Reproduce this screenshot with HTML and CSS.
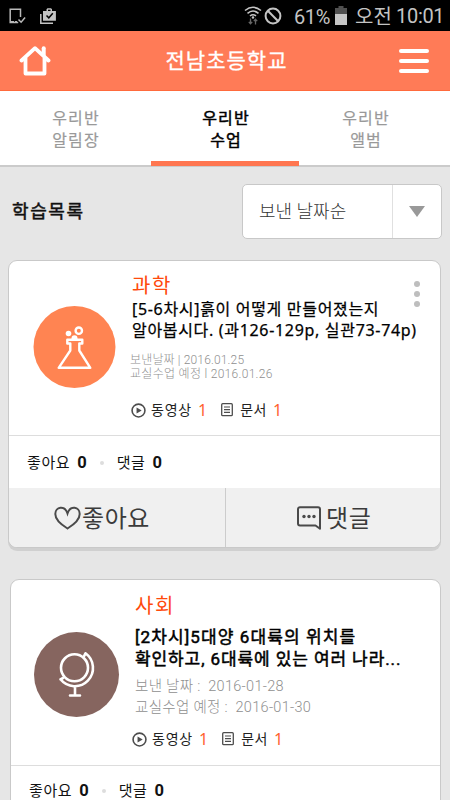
FILE: index.html
```html
<!DOCTYPE html>
<html lang="ko">
<head>
<meta charset="utf-8">
<meta name="viewport" content="width=device-width, initial-scale=1">
<title>우리반 수업</title>
<link rel="stylesheet" href="styles.css">
</head>
<body>
<svg class="defs" aria-hidden="true">
  <symbol id="play" viewBox="0 0 14 14"><circle cx="7" cy="7" r="6" fill="none" stroke="#4d4d4d" stroke-width="1.5"/><path d="M5.2 4.1v5.8L10 7z" fill="#4d4d4d"/></symbol>
  <symbol id="doc" viewBox="0 0 12 14"><rect x=".7" y=".7" width="10.6" height="12" rx="1" fill="none" stroke="#4d4d4d" stroke-width="1.3"/><path d="M3 4h6M3 6.7h6M3 9.4h6" stroke="#4d4d4d" stroke-width="1.2"/></symbol>
</svg>
<div class="screen">
  <div class="status">
    <div class="status-left">
      <svg width="17" height="16" viewBox="0 0 17 16"><path d="M11.5 9V1.2H1.2v13.4h8" fill="none" stroke="#b9b9b9" stroke-width="1.5"/><path d="M1 13h4v2H1zM6 13h2v2H6z" fill="#b9b9b9"/><path d="M9.5 11.5l2.6 2.7 4-4.7" fill="none" stroke="#b9b9b9" stroke-width="1.5"/></svg>
      <svg width="16" height="16" viewBox="0 0 16 16"><path d="M.8 6v9.2H13" fill="none" stroke="#c4c4c4" stroke-width="1.5"/><path d="M3 3h3.500V1.200L7.500.2h3.500l1 1V3h3.900v9.700H3z" fill="#c4c4c4"/><path d="M8 1.700h2.500V3H8z" fill="#000"/><path d="M6.500 7.500l2.300 2.300 4-4.500" fill="none" stroke="#000" stroke-width="1.500"/></svg>
    </div>
    <div class="status-right">
      <svg class="wifi" width="18" height="20" viewBox="0 0 18 20"><g fill="none" stroke="#c4c4c4" stroke-width="1.600"><path d="M1 4.500Q9-2 17 4.500M3.500 7.300q5.500-4.600 11 0M6 10q3-2.500 6 0"/></g><circle cx="9" cy="11.500" r="1.200" fill="#c4c4c4"/><path d="M6.500 12.500v5M4.800 15.800l1.700 2 1.700-2M11.500 18.500v-5M9.800 15.200l1.700-2 1.700 2" fill="none" stroke="#666" stroke-width="1.300"/></svg>
      <svg class="block" width="18" height="18" viewBox="0 0 18 18"><circle cx="9" cy="9" r="7.400" fill="none" stroke="#c4c4c4" stroke-width="2"/><path d="M3.800 3.800l10.400 10.400" stroke="#c4c4c4" stroke-width="2"/></svg>
      <span class="percent">61%</span>
      <svg class="battery" width="12" height="19" viewBox="0 0 12 19"><path d="M0 2h3.500V0h5v2H12v17H0z" fill="#505050"/><path d="M0 8h12v11H0z" fill="#c6c6c6"/></svg>
      <span class="ampm">오전</span><span class="time">10:01</span>
    </div>
  </div>
  <header class="header">
    <svg class="home" width="32" height="32" viewBox="0 0 32 32"><path d="M2.500 15.500L16 3.200l13.500 12.300M6.500 13v15.500h19V13" fill="none" stroke="#fff" stroke-width="3.800" stroke-linejoin="round" stroke-linecap="round"/><path d="M24.700 3.200V10" stroke="#fff" stroke-width="4" stroke-linecap="round"/></svg>
    <h1>전남초등학교</h1>
    <div class="menu"><i></i><i></i><i></i></div>
  </header>
  <nav class="tabs">
    <a class="tab">우리반<br>알림장</a>
    <a class="tab active">우리반<br>수업</a>
    <a class="tab last">우리반<br>앨범</a>
  </nav>
  <div class="toolbar">
    <h2>학습목록</h2>
    <div class="select"><span>보낸 날짜순</span><div class="arrow"><i></i></div></div>
  </div>
  <article class="card first">
    <div class="body">
      <div class="disc">
        <svg width="83" height="83" viewBox="0 0 83 83"><circle cx="41.500" cy="41" r="41" fill="#ff8452"/><g fill="none" stroke="#fff" stroke-width="2.400"><path d="M37.300 37.500h-3v-3.700h15v3.700h-3v7l11 17.300H25.700l11.600-17.300z" stroke-linejoin="round"/><circle cx="45.800" cy="24.700" r="3.200"/></g><circle cx="35.500" cy="27.500" r="2.800" fill="#fff"/><path d="M38.500 34v-1.800a3 3 0 0 1 6 0V34z" fill="#fff"/></svg>
      </div>
      <div class="info">
        <div class="subject">과학</div>
        <div class="title"><div class="t1">[5-6차시]흙이 어떻게 만들어졌는지</div><div class="t2">알아봅시다. (과126-129p, 실관73-74p)</div></div>
        <div class="dates"><div class="d1">보낸날짜 | 2016.01.25</div><div class="d2">교실수업 예정 l 2016.01.26</div></div>
        <div class="media"><svg class="play"><use href="#play"/></svg><span class="video">동영상</span><b>1</b><svg class="doc"><use href="#doc"/></svg><span class="paper">문서</span><b>1</b></div>
      </div>
      <div class="more"><i></i><i></i><i></i></div>
    </div>
    <div class="counts"><span>좋아요</span><b>0</b><i></i><span>댓글</span><b>0</b></div>
    <div class="actions">
      <div class="action like"><svg width="27" height="24" viewBox="0 0 27 24"><path d="M13.500 22.500C7 18.500 1.300 13.500 1.300 8c0-7.500 9.500-9 12.200-.5 2.700-8.500 12.200-7 12.200.5 0 5.500-5.700 10.500-12.200 14.500z" fill="none" stroke="#4a4a4a" stroke-width="2"/></svg><span>좋아요</span></div>
      <div class="action reply"><svg width="24" height="24" viewBox="0 0 24 24"><path d="M3 1.200h18a2 2 0 0 1 2 2v19.600l-4.500-3.300H3a2 2 0 0 1-2-2V3.200a2 2 0 0 1 2-2z" fill="none" stroke="#4a4a4a" stroke-width="2" stroke-linejoin="round"/><g fill="#4a4a4a"><circle cx="7" cy="10.500" r="1.700"/><circle cx="12" cy="10.500" r="1.700"/><circle cx="17" cy="10.500" r="1.700"/></g></svg><span>댓글</span></div>
    </div>
  </article>
  <article class="card second">
    <div class="body">
      <div class="disc">
        <svg width="86" height="86" viewBox="0 0 86 86"><circle cx="42.500" cy="42.500" r="42.500" fill="#86655f"/><g fill="none" stroke="#fff" stroke-width="2.600" stroke-linecap="round"><circle cx="40.500" cy="35.800" r="13.500"/><path d="M51.500 21.300A18.200 18.200 0 1 1 26.500 47.300M51.500 21.300l-1.300 2.500M26.500 47.300l2.500-1.300M41 54.500V63.500M36 63.500h10"/></g></svg>
      </div>
      <div class="info">
        <div class="subject">사회</div>
        <div class="title"><div class="t1">[2차시]5대양 6대륙의 위치를</div><div class="t2">확인하고, 6대륙에 있는 여러 나라...</div></div>
        <div class="dates"><div class="d1">보낸 날짜 :&nbsp; 2016-01-28</div><div class="d2">교실수업 예정 :&nbsp; 2016-01-30</div></div>
        <div class="media"><svg class="play"><use href="#play"/></svg><span class="video">동영상</span><b>1</b><svg class="doc"><use href="#doc"/></svg><span class="paper">문서</span><b>1</b></div>
      </div>
    </div>
    <div class="counts"><span>좋아요</span><b>0</b><i></i><span>댓글</span><b>0</b></div>
  </article>
</div>
</body>
</html>
```
FILE: styles.css
```css
* { box-sizing: border-box; margin: 0; padding: 0; }
body { background: #e6e6e6; font-family: Roboto, "Noto Sans CJK KR", sans-serif; color: #111; }
svg { display: block; flex: none; }
.defs { width: 0; height: 0; position: absolute; }
.screen { width: 450px; height: 800px; overflow: hidden; background: #e6e6e6; white-space: nowrap; }

.status { height: 31px; background: #000; display: flex; justify-content: space-between; color: #c4c4c4; }
.status-left { display: flex; gap: 14px; padding: 8px 0 0 9px; }
.status-right { display: flex; font-size: 20px; line-height: 32px; }
.wifi { margin: 6px 2px 0 0; }
.block { margin: 7px 12px 0 0; }
.percent { width: 41px; letter-spacing: -.4px; line-height: 34px; }
.battery { margin: 6px 8px 0 0; }
.ampm { width: 41px; font-size: 20px; line-height: 34px; }
.time { width: 54px; letter-spacing: -.3px; line-height: 33px; }

.header { height: 60px; background: #ff7b57; border-bottom: 1px solid #ff6a3c; display: flex; align-items: center; justify-content: space-between; padding: 0 21px 0 19px; }
h1 { font-size: 21px; line-height: 30px; font-weight: 400; color: #fff; -webkit-text-stroke: .3px #fff; letter-spacing: 1px; margin-left: 3px; }
.menu { width: 30px; display: flex; flex-direction: column; gap: 6px; }
.menu i { height: 4px; border-radius: 2px; background: #fff; }

.tabs { height: 76px; background: #fff; border-bottom: 2px solid #cbcbcb; display: grid; grid-template-columns: 151px 148px 151px; text-align: center; font-size: 16px; line-height: 22px; color: #999; }
.tab { padding: 17px 0 0 1px; letter-spacing: 1.1px; -webkit-text-stroke: .2px; margin-bottom: -1px; }
.tab.active { color: #000; border-bottom: 5px solid #ff7650; -webkit-text-stroke: .5px; padding-left: 2px; }
.tab.last { padding-right: 18px; }

.toolbar { height: 93px; display: flex; align-items: flex-start; justify-content: space-between; padding: 17px 8px 0 12px; }
h2 { font-size: 18px; line-height: 56px; font-weight: 400; -webkit-text-stroke: .5px; letter-spacing: 1.6px; }
.select { width: 200px; height: 55px; background: #fff; border: 1px solid #c8c8c8; border-radius: 5px; display: flex; justify-content: space-between; font-size: 18px; line-height: 54px; color: #333; padding-left: 16px; font-weight: 300; }
.arrow { width: 49px; border-left: 1px solid #e0e0e0; display: flex; align-items: center; justify-content: center; }
.arrow i { border: 8px solid transparent; border-top: 11px solid #999; border-bottom: 0; }

.card { width: 433px; height: 288px; margin-left: 8px; background: #fff; border: 1px solid #c9c9c9; border-radius: 9px; box-shadow: 0 3px 0 #d0d0d0; overflow: hidden; }
.body { height: 175px; display: flex; border-bottom: 1px solid #ddd; position: relative; }
.disc { width: 123px; padding: 45px 0 0 24px; flex: none; }
.info { flex: 1; padding-top: 11px; }
.subject { color: #ff4a0c; font-size: 20px; line-height: 28px; letter-spacing: 1.5px; }
.title { font-size: 16px; line-height: 21px; color: #000; }
.first .info { font-family: "Noto Sans", "Noto Sans CJK KR", sans-serif; }
.first .title { -webkit-text-stroke: .25px; letter-spacing: .68px; margin-top: -1px; }
.dates { font-size: 12px; line-height: 14px; color: #8f8f8f; margin: 12px 0 0 -2px; font-weight: 300; }
.first .dates { font-family: Roboto, "Noto Sans CJK KR", sans-serif; }
.first .d1 { letter-spacing: .15px; }
.first .d2 { letter-spacing: .3px; }
.media { display: flex; align-items: center; margin: 19px 0 0 -1px; font-size: 14px; line-height: 20px; color: #222; }
.media b { font: 400 16px/20px "Noto Sans", sans-serif; color: #ff6330; }
.play { width: 15px; height: 15px; }
.doc { width: 12px; height: 14px; margin-left: 14px; }
.video { margin: 0 6px 0 5px; letter-spacing: .8px; }
.paper { margin: 0 6px 0 7px; letter-spacing: .5px; }
.more { position: absolute; left: 405px; top: 20px; display: flex; flex-direction: column; gap: 4px; }
.more i { width: 6px; height: 6px; border-radius: 50%; background: #bebebe; }
.counts { height: 52px; display: flex; align-items: center; padding: 1px 0 0 18px; font-size: 15px; line-height: 22px; letter-spacing: .6px; }
.counts b { font-size: 16.500px; margin-left: 7px; font-weight: 700; letter-spacing: 0; }
.counts i { width: 4px; height: 4px; border-radius: 50%; background: #ddd; margin: 0 13px 0 13px; }
.actions { height: 60px; background: #f0f0f0; display: flex; }
.action { width: 217px; flex: none; display: flex; align-items: center; font-size: 24px; color: #3b3b3b; line-height: 60px; }
.action span { padding-top: 2px; letter-spacing: .6px; }
.like { padding-left: 45px; gap: 1px; border-right: 1px solid #ccc; }
.reply { padding-left: 71px; gap: 5px; }

.second { width: 431px; margin: 31px 0 0 10px; height: 300px; }
.second .body { height: 186px; }
.second .disc { padding: 52px 0 0 23px; width: 124px; }
.second .info { padding-top: 12px; }
.second .title { font-size: 17px; line-height: 22px; margin-top: 6px; -webkit-text-stroke: .5px; }
.second .t1 { letter-spacing: 1.1px; }
.second .t2 { letter-spacing: .9px; }
.second .dates { font-size: 14.500px; line-height: 21px; margin-top: 6px; margin-left: 0; letter-spacing: .3px; }
.second .media { margin: 11px 0 0 -3px; }
.second .counts { height: 49px; }
```
